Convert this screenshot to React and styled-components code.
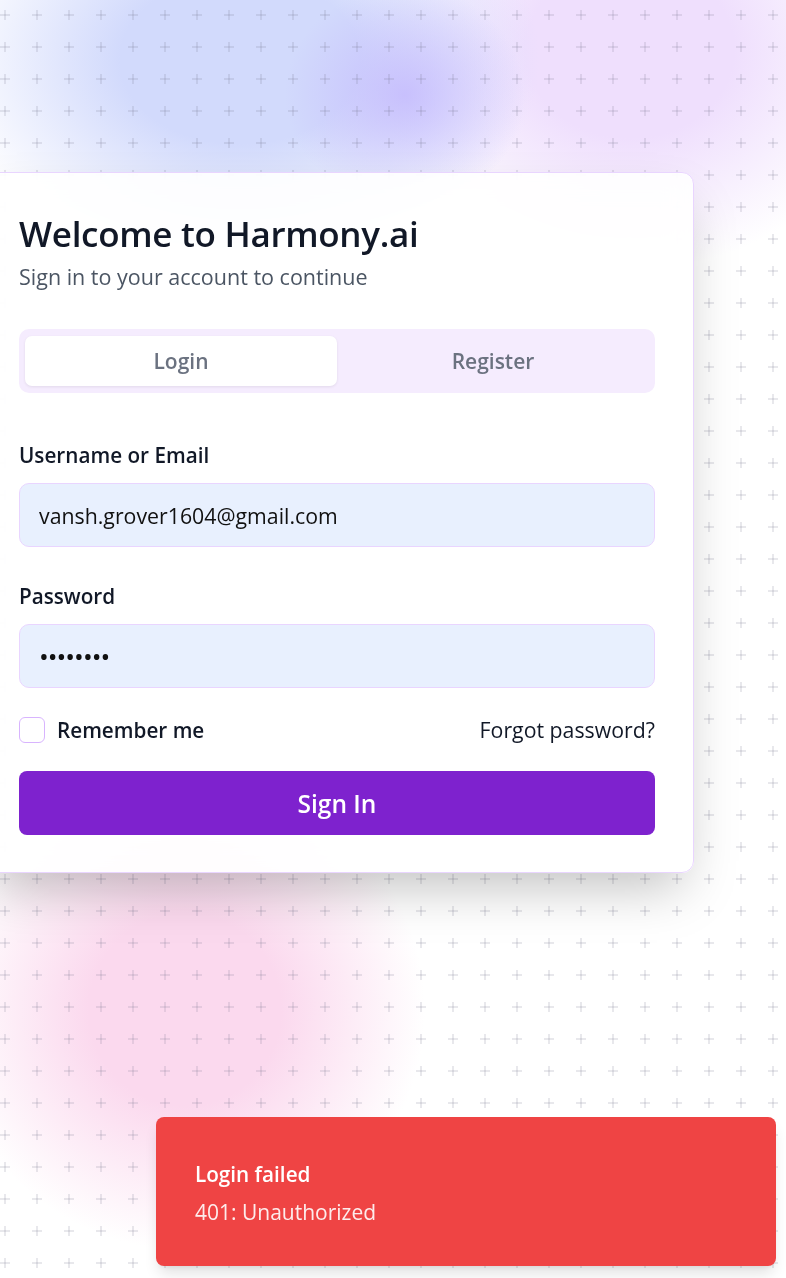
import styled, { createGlobalStyle } from 'styled-components';

const plus =
    "url(\"data:image/svg+xml,%3Csvg xmlns='http://www.w3.org/2000/svg' width='32' height='32'%3E%3Cg fill='%236e6e8c' fill-opacity='0.16'%3E%3Crect x='0' y='14' width='10' height='2'/%3E%3Crect x='4' y='10' width='2' height='10'/%3E%3C/g%3E%3C/svg%3E\")";

const GlobalStyle = createGlobalStyle`
    * { box-sizing: border-box; }
    html, body { margin: 0; padding: 0; }
    body {
        font-family: 'Open Sans', 'Noto Sans', sans-serif;
        color: #111827;
        overflow: hidden;
    }
`;

function App() {
    return (
        <Page>
            <GlobalStyle />
            <Card>
                <Title>Welcome to Harmony.ai</Title>
                <Subtitle>Sign in to your account to continue</Subtitle>

                <Tabs>
                    <Tab $active>Login</Tab>
                    <Tab>Register</Tab>
                </Tabs>

                <Field>
                    <Label>Username or Email</Label>
                    <Input type='text' defaultValue='vansh.grover1604@gmail.com' />
                </Field>
                <Field>
                    <Label>Password</Label>
                    <Input type='password' defaultValue='password' $dots />
                </Field>

                <OptionsRow>
                    <Remember>
                        <Checkbox type='checkbox' />
                        Remember me
                    </Remember>
                    <Forgot>Forgot password?</Forgot>
                </OptionsRow>

                <SubmitButton>Sign In</SubmitButton>
            </Card>

            <Toast>
                <ToastTitle>Login failed</ToastTitle>
                <ToastText>401: Unauthorized</ToastText>
            </Toast>
        </Page>
    );
}

export default App;

const Page = styled.div`
    min-height: 1278px;
    padding-top: 172px;
    background-color: #ffffff;
    background-image: ${plus},
        radial-gradient(ellipse 120px 110px at 405px 95px, rgba(196, 186, 253, 0.85), rgba(196, 186, 253, 0) 100%),
        radial-gradient(ellipse 300px 210px at 240px 60px, rgba(210, 218, 252, 1) 40%, rgba(210, 218, 252, 0) 100%),
        radial-gradient(ellipse 260px 220px at 630px 50px, rgba(239, 223, 253, 1) 40%, rgba(239, 223, 253, 0) 100%),
        radial-gradient(ellipse 240px 240px at 185px 1010px, rgba(251, 217, 238, 1) 40%, rgba(251, 217, 238, 0) 100%);
    background-repeat: repeat, no-repeat, no-repeat, no-repeat, no-repeat;
`;

const Card = styled.div`
    width: 714px;
    margin-left: -20px;
    padding: 38px 38px 37px;
    background: rgba(255, 255, 255, 0.9);
    backdrop-filter: blur(14px);
    border: 1px solid #e9d5ff;
    border-radius: 12px;
    box-shadow: 0 25px 50px -12px rgba(0, 0, 0, 0.25);
    display: flex;
    flex-direction: column;
`;

const Title = styled.h1`
    margin: 0;
    font-size: 35px;
    line-height: 46px;
    font-weight: 600;
    color: #111827;
    letter-spacing: -0.3px;
`;

const Subtitle = styled.p`
    margin: 6px 0 0;
    font-size: 21.5px;
    line-height: 28px;
    color: #4b5563;
`;

const Tabs = styled.div`
    margin-top: 38px;
    height: 64px;
    padding: 7px 6px;
    background: #f5ecfe;
    border-radius: 10px;
    display: grid;
    grid-template-columns: 1fr 1fr;
`;

const Tab = styled.div`
    display: flex;
    align-items: center;
    justify-content: center;
    border-radius: 7px;
    font-size: 21px;
    font-weight: 600;
    color: #6b7280;
    background: ${(p) => (p.$active ? '#ffffff' : 'transparent')};
    box-shadow: ${(p) => (p.$active ? '0 1px 3px rgba(0, 0, 0, 0.08)' : 'none')};
`;

const Field = styled.div`
    display: flex;
    flex-direction: column;
    margin-top: 48px;

    & + & {
        margin-top: 35px;
    }
`;

const Label = styled.label`
    font-size: 20.7px;
    line-height: 28px;
    font-weight: 600;
    color: #111827;
    margin-bottom: 14px;
`;

const Input = styled.input`
    height: 64px;
    width: 100%;
    padding: 0 19px;
    border: 1px solid #e9d5ff;
    border-radius: 10px;
    background: #e8f0fe;
    font-family: inherit;
    font-size: ${(p) => (p.$dots ? '26px' : '21.3px')};
    letter-spacing: ${(p) => (p.$dots ? '-1px' : '0')};
    color: #111111;
    outline: none;
`;

const OptionsRow = styled.div`
    margin-top: 28px;
    display: flex;
    align-items: center;
    justify-content: space-between;
    height: 28px;
`;

const Remember = styled.label`
    display: flex;
    align-items: center;
    gap: 12px;
    font-size: 20.7px;
    line-height: 28px;
    font-weight: 600;
    color: #111827;
`;

const Checkbox = styled.input`
    appearance: none;
    margin: 0;
    width: 26px;
    height: 26px;
    border: 1px solid #d8b4fe;
    border-radius: 6px;
    background: #ffffff;
`;

const Forgot = styled.a`
    font-size: 21.3px;
    line-height: 28px;
    color: #111827;
`;

const SubmitButton = styled.button`
    margin-top: 27px;
    height: 64px;
    width: 100%;
    border: none;
    border-radius: 8px;
    background: #7e22ce;
    color: #ffffff;
    font-family: inherit;
    font-size: 24.5px;
    font-weight: 600;
`;

const Toast = styled.div`
    position: fixed;
    right: 10px;
    bottom: 12px;
    width: 620px;
    height: 149px;
    padding: 43px 39px;
    background: #ef4444;
    border-radius: 8px;
    box-shadow: 0 10px 15px -3px rgba(0, 0, 0, 0.12), 0 4px 6px -4px rgba(0, 0, 0, 0.1);
    color: #ffffff;
`;

const ToastTitle = styled.div`
    font-size: 20.7px;
    line-height: 28px;
    font-weight: 600;
`;

const ToastText = styled.div`
    margin-top: 10px;
    font-size: 21px;
    line-height: 28px;
    opacity: 0.9;
`;
